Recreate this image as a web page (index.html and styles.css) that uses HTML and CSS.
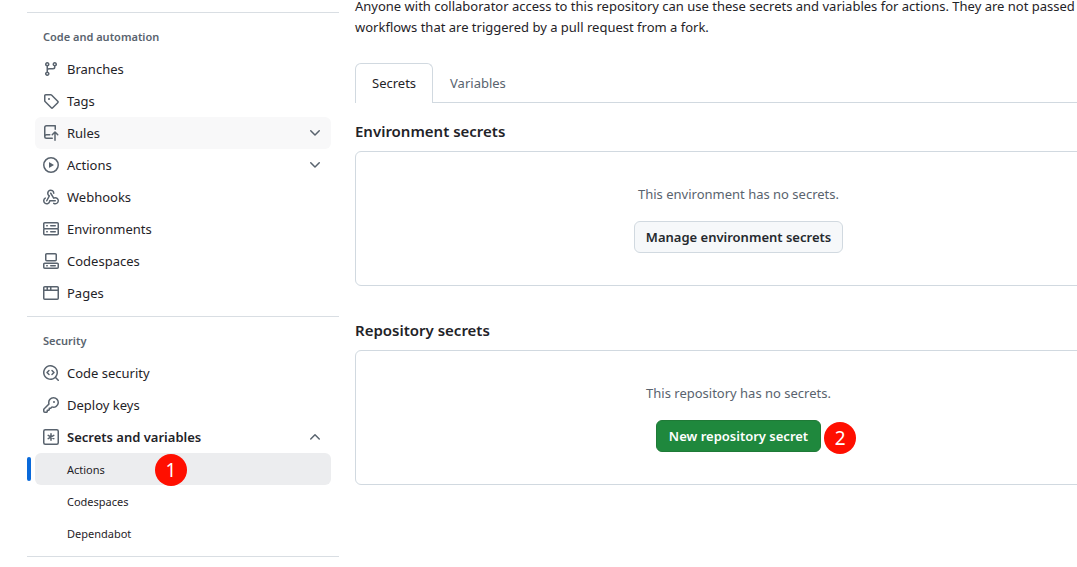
FILE: index.html
```html
<!DOCTYPE html>
<html lang="en">
<head>
<meta charset="utf-8">
<title>Actions secrets</title>
<link rel="stylesheet" href="styles.css">
</head>
<body>
<div class="layout">
  <nav class="sidebar" aria-label="Repository settings">
    <section class="group">
      <h2 class="group-title">Code and automation</h2>
      <ul class="list">
        <li><a class="item" href="#"><svg class="icon" viewBox="0 0 16 16"><path d="M9.5 3.25a2.25 2.25 0 1 1 3 2.122V6A2.5 2.5 0 0 1 10 8.5H6a1 1 0 0 0-1 1v1.128a2.251 2.251 0 1 1-1.5 0V5.372a2.25 2.25 0 1 1 1.5 0v1.836A2.493 2.493 0 0 1 6 7h4a1 1 0 0 0 1-1v-.628A2.25 2.25 0 0 1 9.5 3.25Zm-6 0a.75.75 0 1 0 1.5 0 .75.75 0 0 0-1.5 0Zm8.25-.75a.75.75 0 1 0 0 1.5.75.75 0 0 0 0-1.5ZM4.25 12a.75.75 0 1 0 0 1.5.75.75 0 0 0 0-1.5Z"/></svg><span class="label">Branches</span></a></li>
        <li><a class="item" href="#"><svg class="icon" viewBox="0 0 16 16"><path d="M1 7.775V2.75C1 1.784 1.784 1 2.75 1h5.025c.464 0 .91.184 1.238.513l6.25 6.25a1.75 1.75 0 0 1 0 2.474l-5.026 5.026a1.75 1.75 0 0 1-2.474 0l-6.25-6.25A1.752 1.752 0 0 1 1 7.775Zm1.5 0c0 .066.026.13.073.177l6.25 6.25a.25.25 0 0 0 .354 0l5.025-5.025a.25.25 0 0 0 0-.354l-6.25-6.25a.25.25 0 0 0-.177-.073H2.75a.25.25 0 0 0-.25.25ZM6 5a1 1 0 1 1 0 2 1 1 0 0 1 0-2Z"/></svg><span class="label">Tags</span></a></li>
        <li><button class="item item-hover" type="button" aria-expanded="false"><svg class="icon" viewBox="0 0 16 16"><path d="M1 2.5A2.5 2.5 0 0 1 3.5 0h8.75a.75.75 0 0 1 .75.75v3.5a.75.75 0 0 1-1.5 0V1.5h-8a1 1 0 0 0-1 1v6.708A2.493 2.493 0 0 1 3.5 9h3.25a.75.75 0 0 1 0 1.5H3.5a1 1 0 0 0 0 2h5.75a.75.75 0 0 1 0 1.5H3.5A2.5 2.5 0 0 1 1 11.5Zm13.23 7.79-1.48-1.478v6.438a.75.75 0 0 1-1.5 0V8.811l-1.48 1.48a.749.749 0 0 1-1.06-1.06l2.75-2.75a.75.75 0 0 1 1.06 0l2.75 2.75a.749.749 0 0 1-1.06 1.06Z"/></svg><span class="label">Rules</span><svg class="icon" viewBox="0 0 16 16"><path d="M12.78 5.22a.749.749 0 0 1 0 1.06l-4.25 4.25a.749.749 0 0 1-1.06 0L3.22 6.28a.749.749 0 1 1 1.06-1.06L8 8.939l3.72-3.719a.749.749 0 0 1 1.06 0Z"/></svg></button></li>
        <li><button class="item" type="button" aria-expanded="false"><svg class="icon" viewBox="0 0 16 16"><path d="M8 0a8 8 0 1 1 0 16A8 8 0 0 1 8 0ZM1.5 8a6.5 6.5 0 1 0 13 0 6.5 6.5 0 0 0-13 0Zm4.879-2.773 4.264 2.559a.25.25 0 0 1 0 .428l-4.264 2.559A.25.25 0 0 1 6 10.559V5.442a.25.25 0 0 1 .379-.215Z"/></svg><span class="label">Actions</span><svg class="icon" viewBox="0 0 16 16"><path d="M12.78 5.22a.749.749 0 0 1 0 1.06l-4.25 4.25a.749.749 0 0 1-1.06 0L3.22 6.28a.749.749 0 1 1 1.06-1.06L8 8.939l3.72-3.719a.749.749 0 0 1 1.06 0Z"/></svg></button></li>
        <li><a class="item" href="#"><svg class="icon" viewBox="0 0 16 16"><path d="M5.5 4.25a2.25 2.25 0 0 1 4.5 0 .75.75 0 0 0 1.5 0 3.75 3.75 0 1 0-6.14 2.889l-2.272 4.258a.75.75 0 0 0 1.324.706L7 7.25a.75.75 0 0 0-.309-1.015A2.25 2.25 0 0 1 5.5 4.25Z"/><path d="M7.364 3.607a.75.75 0 0 1 1.03.257l2.608 4.349a3.75 3.75 0 1 1-.628 6.785.75.75 0 0 1 .752-1.299 2.25 2.25 0 1 0-.033-3.88.75.75 0 0 1-1.03-.256L7.107 4.636a.75.75 0 0 1 .257-1.03Z"/><path d="M2.9 8.776A.75.75 0 0 1 2.625 9.8 2.25 2.25 0 1 0 6 11.75a.75.75 0 0 1 .75-.751h5.5a.75.75 0 0 1 0 1.5H7.425a3.751 3.751 0 1 1-5.55-3.998.75.75 0 0 1 1.024.274Z"/></svg><span class="label">Webhooks</span></a></li>
        <li><a class="item" href="#"><svg class="icon" viewBox="0 0 16 16"><path d="M1.75 1h12.5c.966 0 1.75.784 1.75 1.75v4c0 .372-.116.717-.314 1 .198.283.314.628.314 1v4a1.75 1.75 0 0 1-1.75 1.75H1.75A1.75 1.75 0 0 1 0 12.75v-4c0-.358.109-.707.314-1a1.739 1.739 0 0 1-.314-1v-4C0 1.784.784 1 1.75 1ZM1.5 2.75v4c0 .138.112.25.25.25h12.5a.25.25 0 0 0 .25-.25v-4a.25.25 0 0 0-.25-.25H1.75a.25.25 0 0 0-.25.25Zm.25 5.75a.25.25 0 0 0-.25.25v4c0 .138.112.25.25.25h12.5a.25.25 0 0 0 .25-.25v-4a.25.25 0 0 0-.25-.25ZM7 4.75A.75.75 0 0 1 7.75 4h4.5a.75.75 0 0 1 0 1.5h-4.5A.75.75 0 0 1 7 4.75ZM7.75 10h4.5a.75.75 0 0 1 0 1.5h-4.5a.75.75 0 0 1 0-1.5ZM3 4.75A.75.75 0 0 1 3.75 4h.5a.75.75 0 0 1 0 1.5h-.5A.75.75 0 0 1 3 4.75ZM3.75 10h.5a.75.75 0 0 1 0 1.5h-.5a.75.75 0 0 1 0-1.5Z"/></svg><span class="label">Environments</span></a></li>
        <li><a class="item" href="#"><svg class="icon" viewBox="0 0 16 16"><path d="M0 11.25c0-.966.784-1.75 1.75-1.75h12.5c.966 0 1.75.784 1.75 1.75v3A1.75 1.75 0 0 1 14.25 16H1.75A1.75 1.75 0 0 1 0 14.25Zm2-9.5C2 .784 2.784 0 3.75 0h8.5C13.216 0 14 .784 14 1.75v5a1.75 1.75 0 0 1-1.75 1.75h-8.5A1.75 1.75 0 0 1 2 6.75Zm1.75-.25a.25.25 0 0 0-.25.25v5c0 .138.112.25.25.25h8.5a.25.25 0 0 0 .25-.25v-5a.25.25 0 0 0-.25-.25Zm-2 9.5a.25.25 0 0 0-.25.25v3c0 .138.112.25.25.25h12.5a.25.25 0 0 0 .25-.25v-3a.25.25 0 0 0-.25-.25Z"/><path d="M7 12.75a.75.75 0 0 1 .75-.75h4.5a.75.75 0 0 1 0 1.5h-4.5a.75.75 0 0 1-.75-.75Zm-4 0a.75.75 0 0 1 .75-.75h.5a.75.75 0 0 1 0 1.5h-.5a.75.75 0 0 1-.75-.75Z"/></svg><span class="label">Codespaces</span></a></li>
        <li><a class="item" href="#"><svg class="icon" viewBox="0 0 16 16"><path d="M0 2.75C0 1.784.784 1 1.75 1h12.5c.966 0 1.75.784 1.75 1.75v10.5A1.75 1.75 0 0 1 14.25 15H1.75A1.75 1.75 0 0 1 0 13.25ZM14.5 6h-13v7.25c0 .138.112.25.25.25h12.5a.25.25 0 0 0 .25-.25Zm-6-3.5v2h6V2.75a.25.25 0 0 0-.25-.25ZM5 2.5v2h2v-2Zm-3.25 0a.25.25 0 0 0-.25.25V4.5h2v-2Z"/></svg><span class="label">Pages</span></a></li>
      </ul>
    </section>
    <section class="group">
      <h2 class="group-title">Security</h2>
      <ul class="list">
        <li><a class="item" href="#"><svg class="icon" viewBox="0 0 16 16"><path d="M8.47 4.97a.75.75 0 0 0 0 1.06L9.94 7.5 8.47 8.97a.75.75 0 1 0 1.06 1.06l2-2a.75.75 0 0 0 0-1.06l-2-2a.75.75 0 0 0-1.06 0ZM6.53 6.03a.75.75 0 0 0-1.06-1.06l-2 2a.75.75 0 0 0 0 1.06l2 2a.75.75 0 1 0 1.06-1.06L5.06 7.5l1.47-1.47Z"/><path d="M12.246 13.307a7.501 7.501 0 1 1 1.06-1.06l2.474 2.473a.749.749 0 1 1-1.06 1.06ZM1.5 7.5a6.002 6.002 0 0 0 3.608 5.504 6.002 6.002 0 0 0 6.486-1.117.748.748 0 0 1 .292-.293A6 6 0 1 0 1.5 7.5Z"/></svg><span class="label">Code security</span></a></li>
        <li><a class="item" href="#"><svg class="icon" viewBox="0 0 16 16"><path d="M10.5 0a5.499 5.499 0 1 1-1.288 10.848l-.932.932a.749.749 0 0 1-.53.22H7v.75a.749.749 0 0 1-.22.53l-.5.5a.749.749 0 0 1-.53.22H5v.75a.749.749 0 0 1-.22.53l-.5.5a.749.749 0 0 1-.53.22h-2A1.75 1.75 0 0 1 0 14.25v-2c0-.199.079-.389.22-.53l4.932-4.932A5.5 5.5 0 0 1 10.5 0Zm-4 5.5c-.001.431.069.86.205 1.269a.75.75 0 0 1-.181.768L1.5 12.56v1.69c0 .138.112.25.25.25h1.69l.06-.06v-1.19a.75.75 0 0 1 .75-.75h1.19l.06-.06v-1.19a.75.75 0 0 1 .75-.75h1.19l1.023-1.025a.75.75 0 0 1 .768-.18A4 4 0 1 0 6.5 5.5ZM11 6a1 1 0 1 1 0-2 1 1 0 0 1 0 2Z"/></svg><span class="label">Deploy keys</span></a></li>
        <li>
          <button class="item item-open" type="button" aria-expanded="true"><svg class="icon icon-line" viewBox="0 0 16 16"><rect x=".75" y=".75" width="14.5" height="14.5" rx="1.5"/><path d="M8 4.75v6.5M5.2 6.4l5.6 3.2M5.2 9.6l5.6-3.2"/></svg><span class="label">Secrets and variables</span><svg class="icon" viewBox="0 0 16 16"><path d="M3.22 10.53a.749.749 0 0 1 0-1.06l4.25-4.25a.749.749 0 0 1 1.06 0l4.25 4.25a.749.749 0 1 1-1.06 1.06L8 6.811 4.28 10.53a.749.749 0 0 1-1.06 0Z"/></svg></button>
          <ul class="list">
            <li><a class="item item-sub item-current" href="#" aria-current="page">Actions<span class="marker marker-step1">1</span></a></li>
            <li><a class="item item-sub" href="#">Codespaces</a></li>
            <li><a class="item item-sub" href="#">Dependabot</a></li>
          </ul>
        </li>
      </ul>
    </section>
    <hr class="end-rule">
  </nav>
  <main class="content">
    <p class="intro">Anyone with collaborator access to this repository can use these secrets and variables for actions. They are not passed<br>workflows that are triggered by a pull request from a fork.</p>
    <nav class="tabs" aria-label="Secrets and variables">
      <a class="tab tab-selected" href="#" aria-current="page">Secrets</a>
      <a class="tab" href="#">Variables</a>
    </nav>
    <section class="block">
      <h2 class="block-title">Environment secrets</h2>
      <div class="box">
        <p class="box-text">This environment has no secrets.</p>
        <button class="btn" type="button">Manage environment secrets</button>
      </div>
    </section>
    <section class="block">
      <h2 class="block-title">Repository secrets</h2>
      <div class="box">
        <p class="box-text">This repository has no secrets.</p>
        <div class="btn-wrap">
          <button class="btn btn-primary" type="button">New repository secret</button>
          <span class="marker marker-step2">2</span>
        </div>
      </div>
    </section>
  </main>
</div>
</body>
</html>
```
FILE: styles.css
```css
* {
  box-sizing: border-box;
}

body {
  margin: 0;
  overflow: hidden;
  background: #fff;
  color: #1f2328;
  font: 13px/21px "Segoe UI", "Noto Sans", sans-serif;
}

h2,
p,
ul {
  margin: 0;
  padding: 0;
}

ul {
  list-style: none;
}

a {
  color: inherit;
  text-decoration: none;
}

button {
  font: inherit;
  color: inherit;
  cursor: pointer;
}

.layout {
  display: flex;
  gap: 16px;
  padding-left: 27px;
}

.sidebar {
  flex: 0 0 312px;
  padding-top: 12px;
}

.group {
  padding: 8px 8px 7px;
  border-top: 1px solid #d9dee3;
}

.group-title {
  padding: 0 8px;
  color: #59636e;
  font-size: 11px;
  font-weight: 600;
  line-height: 32px;
}

.end-rule {
  margin: 0;
  border: 0;
  border-top: 1px solid #d9dee3;
}

.item {
  position: relative;
  display: flex;
  align-items: center;
  gap: 8px;
  width: 100%;
  min-height: 32px;
  padding: 0 8px;
  border: 0;
  border-radius: 6px;
  background: transparent;
  text-align: left;
}

.label {
  flex: 1;
}

.icon {
  width: 16px;
  height: 16px;
  fill: #59636e;
}

.icon-line {
  fill: none;
  stroke: #59636e;
  stroke-width: 1.5;
  stroke-linecap: round;
}

.item-hover {
  background: #f8f8f9;
}

.item-open {
  font-weight: 600;
}

.item-sub {
  padding-left: 32px;
  font-size: 11px;
}

.item-current {
  background: #ecedef;
}

.item-current::before {
  content: "";
  position: absolute;
  top: 4px;
  left: -8px;
  width: 4px;
  height: 24px;
  border-radius: 6px;
  background: #0969da;
}

.marker {
  position: absolute;
  width: 32px;
  height: 32px;
  border-radius: 50%;
  background: #ff0f00;
  color: #fff;
  font-size: 19px;
  line-height: 33px;
  text-align: center;
}

.marker-step1 {
  top: 1px;
  left: 120px;
}

.marker-step2 {
  top: 2px;
  left: 100%;
  margin-left: 3px;
}

.content {
  flex: 1;
  min-width: 0;
  margin: -4px -45px 0 0;
}

.intro {
  margin-bottom: 25px;
  white-space: nowrap;
}

.tabs {
  display: flex;
  border-bottom: 1px solid #d1d9e0;
}

.tab {
  margin-bottom: -1px;
  padding: 9px 16px;
  border: 1px solid transparent;
  border-bottom: 0;
  color: #59636e;
}

.tab-selected {
  border-color: #d1d9e0;
  border-radius: 6px 6px 0 0;
  background: #fff;
  color: #1f2328;
}

.block {
  padding-top: 16px;
}

.block + .block {
  padding-top: 32px;
}

.block-title {
  margin-bottom: 8px;
  font-size: 15px;
  font-weight: 600;
  line-height: 24px;
}

.box {
  display: flex;
  flex-direction: column;
  align-items: center;
  gap: 16px;
  padding: 32px;
  border: 1px solid #d1d9e0;
  border-radius: 6px;
}

.box-text {
  color: #59636e;
}

.btn {
  height: 32px;
  padding: 0 11px;
  border: 1px solid #d1d9e0;
  border-radius: 6px;
  background: #f6f8fa;
  color: #25292e;
  font-weight: 600;
}

.btn-wrap {
  position: relative;
}

.btn-primary {
  display: block;
  padding: 0 12px;
  border-color: #1f7a37;
  background: #1f883d;
  color: #fff;
}
```
